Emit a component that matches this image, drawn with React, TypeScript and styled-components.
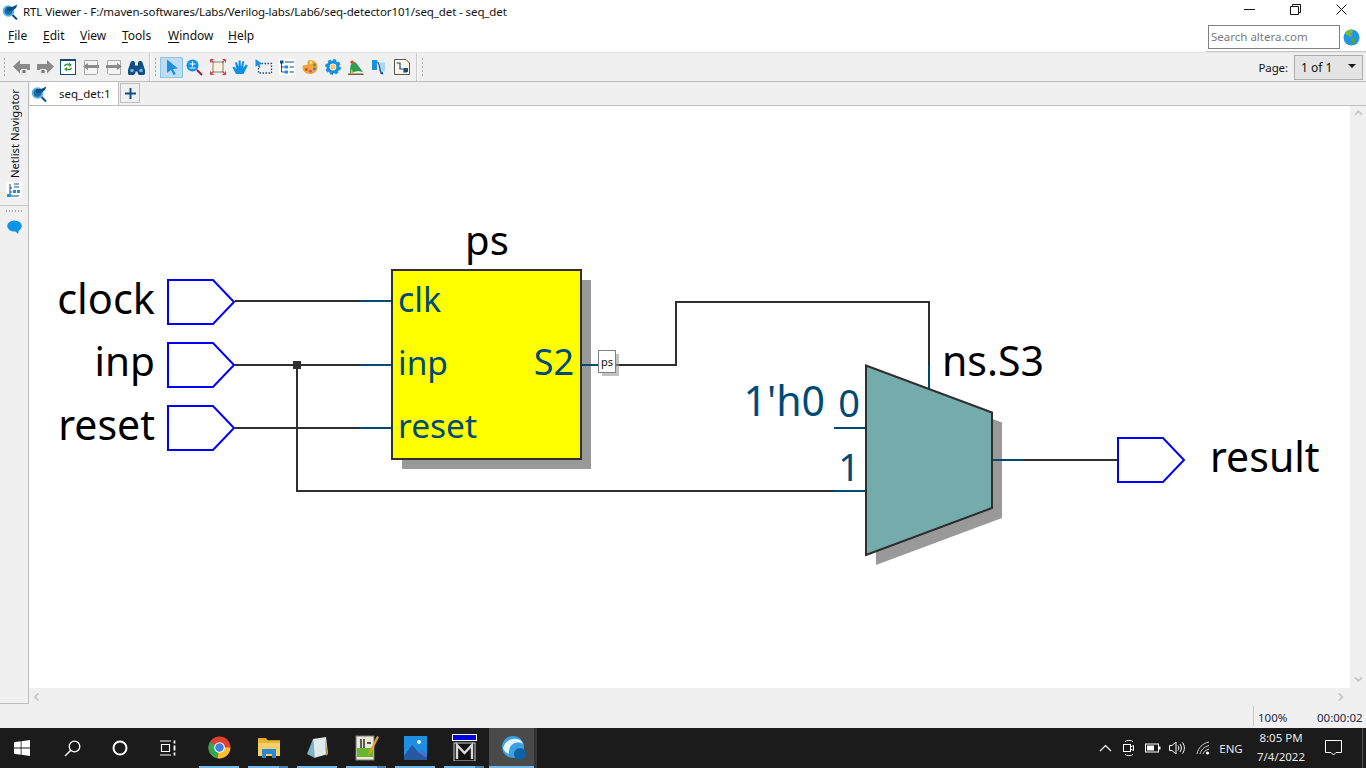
import React from 'react';
import styled, { createGlobalStyle } from 'styled-components';

const GlobalStyle = createGlobalStyle`
  html, body {
    margin: 0;
    padding: 0;
    background: #fff;
    overflow: hidden;
  }
  * {
    box-sizing: border-box;
  }
`;

const UI_FONT = '"Noto Sans", "Open Sans", "Liberation Sans", sans-serif';
const WIRE = '#2f2f2f';
const PIN = '#004b76';
const PORT = '#0000ff';
const SHADOW = '#999999';

const Page = styled.div`
  width: 1366px;
  height: 768px;
  display: flex;
  flex-direction: column;
  font-family: ${UI_FONT};
  font-size: 12px;
  color: #111;
  background: #f0f0f0;
  overflow: hidden;
`;

/* title bar */
const TitleBar = styled.div`
  height: 22px;
  display: flex;
  align-items: center;
  background: #fff;
  padding-left: 2px;
`;
const TitleText = styled.span`
  margin-left: 4px;
  font-size: 11.5px;
  letter-spacing: -0.1px;
  white-space: nowrap;
`;
const WindowButtons = styled.div`
  margin-left: auto;
  display: flex;
  height: 100%;
  margin-right: 2px;
`;
const WindowButton = styled.div`
  width: 46px;
  display: flex;
  align-items: center;
  justify-content: center;
  padding-bottom: 3px;
`;

/* menu bar */
const MenuBar = styled.div`
  height: 31px;
  display: flex;
  align-items: center;
  background: #fff;
  padding-left: 8px;
  border-bottom: 1px solid #e4e4e4;
`;
const MenuItem = styled.span<{ $w: number }>`
  width: ${(p) => p.$w}px;
  font-size: 12px;
  margin-top: -3px;
  u {
    text-decoration-thickness: 1px;
    text-underline-offset: 2px;
  }
`;
const SearchWrap = styled.div`
  margin-left: auto;
  height: 100%;
  width: 160px;
  display: flex;
  align-items: center;
  padding: 3px 0 2px 2px;
  border-bottom: 1px solid #c8c8c8;
  background: #fff;
`;
const SearchBox = styled.div`
  width: 132px;
  height: 24px;
  border: 1px solid #808080;
  color: #7a7a7a;
  font-size: 11.5px;
  line-height: 22px;
  padding-left: 2px;
`;
const GlobeSlot = styled.div`
  margin-left: 3px;
  display: flex;
`;

/* toolbar */
const ToolBar = styled.div`
  height: 29px;
  display: flex;
  align-items: center;
  background: #f0f0f0;
  border-bottom: 1px solid #bdbdbd;
  padding-left: 3px;
`;
const Grip = styled.div<{ $left?: number }>`
  width: 4px;
  height: 20px;
  margin-left: ${(p) => p.$left ?? 0}px;
  background-image: radial-gradient(circle, #a8a8a8 0.9px, transparent 1px);
  background-size: 3px 4px;
`;
const Separator = styled.div<{ $left: number }>`
  width: 2px;
  height: 28px;
  margin-left: ${(p) => p.$left}px;
  border-left: 1px solid #c8c8c8;
  border-right: 1px solid #fff;
`;
const ToolButton = styled.div<{ $active?: boolean }>`
  width: 23px;
  height: 21px;
  display: flex;
  align-items: center;
  justify-content: center;
  background: ${(p) => (p.$active ? '#bfdcf5' : 'transparent')};
  border: 1px solid ${(p) => (p.$active ? '#8cc4f0' : 'transparent')};
`;
const ToolGroup = styled.div<{ $left: number }>`
  display: flex;
  margin-left: ${(p) => p.$left}px;
`;
const PageLabel = styled.span`
  margin-left: auto;
  font-size: 11.5px;
  letter-spacing: -0.1px;
`;
const PageSelect = styled.div`
  width: 69px;
  height: 25px;
  margin: 0 3px 0 6px;
  display: flex;
  align-items: center;
  justify-content: space-between;
  padding: 0 6px;
  background: #e4e4e4;
  border: 1px solid #adadad;
  font-size: 12px;
`;
const Caret = styled.span`
  width: 0;
  height: 0;
  border-left: 4px solid transparent;
  border-right: 4px solid transparent;
  border-top: 4px solid #111;
  margin-top: -3px;
`;

/* body */
const Body = styled.div`
  flex: 1;
  display: flex;
  min-height: 0;
`;
const SideBar = styled.div`
  width: 29px;
  height: 622px;
  display: flex;
  flex-direction: column;
  align-items: center;
  background: #f0f0f0;
  border-right: 1px solid #bdbdbd;
  border-bottom: 1px solid #bdbdbd;
`;
const SideTop = styled.div`
  width: 100%;
  display: flex;
  flex-direction: column;
  align-items: center;
  padding-top: 8px;
  padding-bottom: 7px;
  border-bottom: 1px solid #c8c8c8;
`;
const SideLabel = styled.span`
  writing-mode: vertical-rl;
  transform: rotate(180deg);
  font-size: 11.2px;
  line-height: 14px;
  margin-left: 1px;
  white-space: nowrap;
  height: 88px;
  text-align: left;
`;
const SideIcon = styled.div`
  margin-top: 4px;
  width: 16px;
  height: 16px;
  background: #fff;
  display: flex;
`;
const SideDots = styled.div`
  width: 18px;
  height: 2px;
  margin-top: 4px;
  background-image: radial-gradient(circle, #a8a8a8 0.9px, transparent 1px);
  background-size: 3px 2px;
`;
const SideChat = styled.div`
  margin-top: 8px;
  display: flex;
`;
const Workspace = styled.div`
  flex: 1;
  display: flex;
  flex-direction: column;
  min-width: 0;
`;
const TabRow = styled.div`
  height: 24px;
  display: flex;
  align-items: flex-end;
  padding-left: 1px;
  border-bottom: 1px solid #bdbdbd;
`;
const Tab = styled.div`
  width: 89px;
  height: 23px;
  display: flex;
  align-items: center;
  background: #fff;
  border-right: 1px solid #bdbdbd;
  padding-left: 1px;
  font-size: 11.5px;
`;
const TabText = styled.span`
  margin-left: 11px;
`;
const AddTab = styled.div`
  width: 20px;
  height: 20px;
  margin: 0 0 1px 1px;
  align-self: center;
  display: flex;
  align-items: center;
  justify-content: center;
  background: #f0f0f0;
  border: 1px solid #bdbdbd;
`;
const CanvasRow = styled.div`
  height: 582px;
  display: flex;
`;
const Canvas = styled.div`
  width: 1321px;
  height: 582px;
  background: #fff;
`;
const VScroll = styled.div`
  flex: 1;
  display: flex;
  flex-direction: column;
  justify-content: space-between;
  align-items: center;
  padding: 3px 0;
`;
const HScroll = styled.div`
  height: 18px;
  width: 1321px;
  display: flex;
  align-items: center;
  justify-content: space-between;
  padding: 0 4px 0 4px;
`;
const StatusBar = styled.div`
  height: 22px;
  display: flex;
  justify-content: flex-end;
`;
const StatusCell = styled.div<{ $w: number }>`
  width: ${(p) => p.$w}px;
  height: 20px;
  padding-left: 4px;
  font-size: 11.5px;
  line-height: 24px;
  white-space: nowrap;
  color: #1f2a44;
`;
const StatusZoom = styled(StatusCell)`
  border-left: 1px solid #c8c8c8;
`;

/* schematic */
const Schematic = styled.svg`
  display: block;
`;
const Label = styled.text<{ $size: number; $pin?: boolean }>`
  font-family: "Noto Sans", "Open Sans", sans-serif;
  font-size: ${(p) => p.$size}px;
  fill: ${(p) => (p.$pin ? PIN : '#000')};
`;
const TinyLabel = styled.text`
  font-family: "Noto Sans", sans-serif;
  font-size: 11px;
  fill: #111;
`;

/* taskbar */
const TaskBar = styled.div`
  height: 40px;
  flex: none;
  display: flex;
  background: #1b1b1b;
  color: #e8e8e8;
`;
const ShellButton = styled.div<{ $w: number; $shift?: number }>`
  width: ${(p) => p.$w}px;
  padding-left: ${(p) => p.$shift ?? 0}px;
  display: flex;
  align-items: center;
  justify-content: center;
`;
const AppGroup = styled.div`
  display: flex;
  margin-left: 3px;
`;
const AppButton = styled.div<{ $active?: boolean }>`
  position: relative;
  width: 49px;
  height: 40px;
  display: flex;
  align-items: center;
  justify-content: center;
  padding-bottom: 1px;
  background: ${(p) =>
    p.$active ? 'linear-gradient(90deg, #4a4a4a 0 45px, #333 45px 48px, transparent 48px)' : 'transparent'};
`;
const AppLine = styled.span<{ $stacked?: boolean; $active?: boolean }>`
  position: absolute;
  bottom: 0;
  height: 2px;
  left: ${(p) => (p.$active ? 0 : 4)}px;
  width: ${(p) => (p.$active ? 45 : 40)}px;
  background: ${(p) =>
    p.$stacked ? 'linear-gradient(90deg, #76b9ed 0 31px, #4f82ab 31px)' : '#76b9ed'};
`;
const Tray = styled.div`
  margin-left: auto;
  display: flex;
  padding-right: 17px;
  position: relative;
`;
const TrayItem = styled.div<{ $w: number }>`
  width: ${(p) => p.$w}px;
  display: flex;
  align-items: center;
  justify-content: center;
  font-size: 11.5px;
`;
const Clock = styled(TrayItem)`
  flex-direction: column;
  line-height: 19px;
  padding-bottom: 2px;
  font-size: 11.5px;
`;
const TrayEdge = styled.span`
  position: absolute;
  right: 3px;
  top: 0;
  bottom: 0;
  width: 1px;
  background: #555;
`;

const RtlIcon: React.FC = () => (
  <svg width="17" height="17" viewBox="0 0 17 17">
    <circle cx="6.500" cy="8" r="5.800" fill="#4fb0e6" />
    <circle cx="6.500" cy="8" r="3.800" fill="#1c6aa8" />
    <path d="M5 4h5l5.500-2.500L14 5l-4 3H5z" fill="#0c4f86" />
    <path d="M10.500 12l4.500 4.500" stroke="#0c4f86" strokeWidth="2" />
  </svg>
);

const GlobeIcon: React.FC = () => (
  <svg width="17" height="17" viewBox="0 0 17 17">
    <circle cx="8.500" cy="8.500" r="8" fill="#1c97ea" />
    <path d="M3 2.500c2-1.500 4-2 6-1.500l1 2-2 2 1 2-2 1-3-2-2-1z" fill="#7fb53b" />
    <path d="M8 9l4 0.500 1 2-3 4.500-1-1-1-3z" fill="#5fa02c" />
  </svg>
);

const ArrowIcon: React.FC<{ flip?: boolean }> = ({ flip }) => (
  <svg width="20" height="17" viewBox="0 0 20 17">
    <g transform={flip ? 'translate(20 0) scale(-1 1)' : undefined}>
      <path d="M1 7.500l7-6.500v4h10v6H8v3.500z" fill="#8a8a8a" />
      <rect x="9" y="10" width="6" height="6" fill="#e8e8e8" />
      <rect x="10.500" y="11" width="3" height="3" fill="#777" />
    </g>
  </svg>
);

const RefreshIcon: React.FC = () => (
  <svg width="16" height="16" viewBox="0 0 16 16">
    <rect x="0.500" y="0.500" width="15" height="15" fill="#fff" stroke="#0f4a7c" />
    <rect x="0" y="0" width="16" height="2" fill="#0f4a7c" />
    <path d="M4 7c0-2 3-3 5-2V3.500l3 2.500-3 2V6.500C7.500 6 6 6 5 7.500z" fill="#3f9b3f" />
    <path d="M12 9c0 2-3 3-5 2v1.500L4 10l3-2v1.500C8.500 10 10 10 11 8.500z" fill="#3f9b3f" />
  </svg>
);

const PageArrowIcon: React.FC<{ flip?: boolean }> = ({ flip }) => (
  <svg width="16" height="15" viewBox="0 0 16 15">
    <g transform={flip ? 'translate(16 0) scale(-1 1)' : undefined}>
      <path d="M1.500 0.500h13v12.500l-1.500 1.500H1.500z" fill="#f4f4f4" stroke="#a8a8a8" />
      <path d="M0 6.500L5 3v2h11v3H5v2z" fill="#8a8a8a" />
    </g>
  </svg>
);

const BinocularsIcon: React.FC = () => (
  <svg width="17" height="15" viewBox="0 0 17 15">
    <path d="M2.500 2.500C3 0.500 6.500 0.500 7 2.500v3h3v-3c0.500-2 4-2 4.500 0L17 10a4 4 0 1 1-7.500 1.500h-2A4 4 0 1 1 0 10z" fill="#134f84" />
    <circle cx="4" cy="10.500" r="1.800" fill="#6fb6e6" />
    <circle cx="13" cy="10.500" r="1.800" fill="#6fb6e6" />
  </svg>
);

const PointerIcon: React.FC = () => (
  <svg width="14" height="16" viewBox="0 0 14 16">
    <path d="M2 0.500l11 9-5 .6 2.800 4.900-2.200 1-2.700-5L2 14z" fill="#1b8fe0" />
  </svg>
);

const ZoomIcon: React.FC = () => (
  <svg width="17" height="17" viewBox="0 0 17 17">
    <circle cx="6.500" cy="6.500" r="6" fill="#0a94e8" />
    <path d="M3.500 5h6M6.500 2.500v5M3.500 9h6" stroke="#fff" strokeWidth="1.200" />
    <path d="M11 11l5 5" stroke="#9b1c2e" strokeWidth="2" />
  </svg>
);

const FitIcon: React.FC = () => (
  <svg width="16" height="16" viewBox="0 0 16 16">
    <rect x="3" y="3" width="10" height="10" fill="#fbf3dc" stroke="#666" strokeWidth="0.800" />
    <path d="M0.500 0.500l3 3M0.500 0.500h3M0.500 0.500v3M15.500 0.500l-3 3M15.500 0.500h-3M15.500 0.500v3M0.500 15.500l3-3M0.500 15.500h3M0.500 15.500v-3M15.500 15.500l-3-3M15.500 15.500h-3M15.500 15.500v-3" stroke="#e03030" strokeWidth="1.100" fill="none" />
  </svg>
);

const HandIcon: React.FC = () => (
  <svg width="17" height="16" viewBox="0 0 17 16">
    <path d="M4 15L0.500 8.500 2 7.500l2.500 2.500L3 3.500 4.800 3 6.500 8 6.700 1.500h1.900L9 8l1.500-6 1.800 0.500L11 9l3-3.500 1.800 1L11.500 15z" fill="#0d8fe4" />
  </svg>
);

const MarqueeIcon: React.FC = () => (
  <svg width="18" height="16" viewBox="0 0 18 16">
    <rect x="3.500" y="4.500" width="13" height="9.500" fill="none" stroke="#134f84" strokeWidth="1.300" strokeDasharray="1.500 1.500" />
    <path d="M0.500 0l7 5-3 .5 1 3-1 .5-1.500-3L0.500 8z" fill="#1b8fe0" />
  </svg>
);

const HierarchyIcon: React.FC = () => (
  <svg width="16" height="16" viewBox="0 0 16 16">
    <rect width="16" height="16" fill="#fff" />
    <path d="M2.500 3v10M2.500 8h3M2.500 13h3" stroke="#134f84" />
    <rect x="1" y="1.500" width="3.500" height="3" fill="#134f84" />
    <rect x="5.500" y="6.500" width="3.500" height="3" fill="#1c8fe0" />
    <rect x="5.500" y="11.500" width="3.500" height="3" fill="#1c8fe0" />
    <path d="M6 3h9M10.500 8H15M10.500 13H15" stroke="#134f84" strokeWidth="1.200" />
  </svg>
);

const PaletteIcon: React.FC = () => (
  <svg width="16" height="16" viewBox="0 0 16 16">
    <path d="M8 1c4.500 0 7.500 3 7.500 7 0 4.500-3.500 7-7.500 7-4.500 0-7.500-3-7.500-6.500 0-2.500 2-2.500 3.500-2.500S6 5 5.500 3.500C5.200 2 6 1 8 1z" fill="#f3a53c" />
    <circle cx="9" cy="3.500" r="1.300" fill="#f4f0a0" />
    <circle cx="12.500" cy="6" r="1.400" fill="#3fa34a" />
    <circle cx="12.500" cy="10" r="1.400" fill="#2f7fd0" />
    <circle cx="8.500" cy="12.300" r="1.400" fill="#c34bb0" />
    <circle cx="4.300" cy="10.500" r="1.400" fill="#e2403a" />
  </svg>
);

const GearIcon: React.FC = () => (
  <svg width="16" height="16" viewBox="0 0 16 16">
    <circle cx="8" cy="8" r="5" fill="none" stroke="#1590e2" strokeWidth="3.200" />
    <circle cx="8" cy="8" r="6.800" fill="none" stroke="#1590e2" strokeWidth="2.200" strokeDasharray="3 2.340" />
    <circle cx="8" cy="8" r="2.600" fill="#f6c66a" />
  </svg>
);

const BirdIcon: React.FC = () => (
  <svg width="16" height="17" viewBox="0 0 16 17">
    <path d="M2 14c0-4 0-8 2-10 2-2 4-1 5 1l6 8-5-1z" fill="#2f9e4d" />
    <path d="M2 3.500L4 2c1-.5 2 0 2.200 1L4 5z" fill="#e8a032" />
    <circle cx="4" cy="3" r="1.600" fill="#d9402e" />
    <path d="M0 14.500h15l1 1.500H0z" fill="#7a5540" />
    <path d="M3 10l3 4H3z" fill="#e6c14a" />
  </svg>
);

const PortsIcon: React.FC = () => (
  <svg width="16" height="17" viewBox="0 0 16 17">
    <path d="M1 1h5v10H1z" fill="#1590e2" />
    <path d="M8 3.500h6v9H8z" fill="#a9d6f2" />
    <path d="M6 3c3 0 2 9 5 12" fill="none" stroke="#134f84" strokeWidth="1.200" />
    <path d="M9 14.500l3.500 1-1-3z" fill="#134f84" />
  </svg>
);

const SheetIcon: React.FC = () => (
  <svg width="16" height="16" viewBox="0 0 16 16">
    <path d="M0.500 0.500H12L15.500 4v11.500H0.500z" fill="#fdf6e2" stroke="#555" />
    <path d="M2.500 4h3.500v6h4v3h3" fill="none" stroke="#134f84" strokeWidth="1.200" />
    <rect x="10" y="9" width="4" height="4" fill="#134f84" />
  </svg>
);

const NetlistIcon: React.FC = () => (
  <svg width="16" height="16" viewBox="0 0 16 16">
    <path d="M4 2v12M4 14h9M4 10h2M4 6h2M8 2h5M8 5h5" stroke="#134f84" strokeWidth="1" fill="none" />
    <rect x="1" y="12" width="4" height="3" fill="#1c8fe0" />
    <rect x="7" y="8" width="3" height="3" fill="#1c8fe0" />
    <rect x="11" y="8" width="3" height="3" fill="#1c8fe0" />
  </svg>
);

const ChatIcon: React.FC = () => (
  <svg width="15" height="14" viewBox="0 0 15 14">
    <ellipse cx="7.500" cy="6" rx="7.300" ry="5.600" fill="#0d94e6" />
    <path d="M7 10h5l-1 4z" fill="#0d94e6" />
  </svg>
);

const Chevron: React.FC<{ dir: 'left' | 'right' | 'up' | 'down' }> = ({ dir }) => {
  const d = { left: 'M6 1L2 5l4 4', right: 'M2 1l4 4-4 4', up: 'M1 6l4-4 4 4', down: 'M1 2l4 4 4-4' }[dir];
  return (
    <svg width="9" height="10" viewBox="0 0 10 10">
      <path d={d} fill="none" stroke="#c8c8c8" strokeWidth="2" />
    </svg>
  );
};

const WinLogo: React.FC = () => (
  <svg width="16" height="16" viewBox="0 0 16 16">
    <path d="M0 2.300l6.700-1v6.300H0zM7.500 1.200L16 0v7.600H7.500zM0 8.400h6.700v6.300l-6.700-1zM7.500 8.400H16V16l-8.500-1.200z" fill="#fff" />
  </svg>
);

const SearchGlass: React.FC = () => (
  <svg width="17" height="17" viewBox="0 0 17 17">
    <circle cx="10.500" cy="6.500" r="5.300" fill="none" stroke="#fff" strokeWidth="1.300" />
    <path d="M6.800 10.300L1 16" stroke="#fff" strokeWidth="1.500" />
  </svg>
);

const CortanaRing: React.FC = () => (
  <svg width="16" height="16" viewBox="0 0 16 16">
    <circle cx="8" cy="8" r="6.500" fill="none" stroke="#fff" strokeWidth="2" />
  </svg>
);

const TaskViewIcon: React.FC = () => (
  <svg width="16" height="16" viewBox="0 0 16 16">
    <path d="M0 1h11M0 15h11M1.500 4.500h8v7h-8z" fill="none" stroke="#fff" strokeWidth="1.100" />
    <path d="M14.500 0.500v3M14.500 5.500v5M14.500 12.500v3" stroke="#fff" strokeWidth="1.800" />
  </svg>
);

const ChromeIcon: React.FC = () => (
  <svg width="23" height="23" viewBox="0 0 24 24">
    <circle cx="12" cy="12" r="11.500" fill="#e2402f" />
    <path d="M12 12L2 6.300A11.500 11.500 0 0 0 10 23.300z" fill="#2da94f" />
    <path d="M12 12h11.300A11.500 11.500 0 0 1 10 23.300z" fill="#fbc02d" />
    <circle cx="12" cy="12" r="5.600" fill="#fff" />
    <circle cx="12" cy="12" r="4.400" fill="#3f7fe6" />
  </svg>
);

const FolderIcon: React.FC = () => (
  <svg width="22" height="20" viewBox="0 0 22 20">
    <path d="M0 0h8l2 3h-10z" fill="#e9a825" />
    <path d="M0 2.500h22V18H0z" fill="#f4cf6a" />
    <path d="M0 2.500h22V5H0z" fill="#e9b530" />
    <path d="M4 11h14v9h-4v-4H8v4H4z" fill="#2b87d3" />
  </svg>
);

const NoteIcon: React.FC = () => (
  <svg width="24" height="24" viewBox="0 0 24 24">
    <path d="M7 3l13-2 2 17-14 4z" fill="#dfe9e9" />
    <path d="M7 3L1 18l8 4z" fill="#7eb5c4" />
    <path d="M19 3l3 15-2 2z" fill="#a98c52" />
  </svg>
);

const ChartPadIcon: React.FC = () => (
  <svg width="24" height="26" viewBox="0 0 24 26">
    <rect x="1" y="1" width="18" height="24" fill="#e8e8d8" stroke="#777" />
    <rect x="2" y="13" width="16" height="9" fill="#6ab52e" />
    <path d="M6 4v9M9 4v9M12 8h4" stroke="#222" strokeWidth="1.400" />
    <path d="M22 1l-8 16-1 3 3-2 8-16z" fill="#e8a020" />
  </svg>
);

const PhotosIcon: React.FC = () => (
  <svg width="23" height="24" viewBox="0 0 23 24">
    <rect width="23" height="24" fill="#1f8fe4" />
    <circle cx="15" cy="6" r="2" fill="#e8f4ff" />
    <path d="M0 20L8 9l7 8 3-3 5 5v5H0z" fill="#27589f" />
    <path d="M15 17l3-3 5 5v3z" fill="#4b6fd1" />
  </svg>
);

const ModelSimIcon: React.FC = () => (
  <svg width="25" height="27" viewBox="0 0 25 27">
    <rect x="0.500" y="0.500" width="24" height="6" fill="#0000e0" stroke="#fff" />
    <rect x="2" y="9" width="21" height="18" fill="#111" stroke="#cfcfcf" />
    <path d="M5 25V11l7.500 8L20 11v14" fill="none" stroke="#d8d8d8" strokeWidth="2.400" />
  </svg>
);

const ShellBallIcon: React.FC = () => (
  <svg width="24" height="24" viewBox="0 0 24 24">
    <circle cx="11" cy="11" r="11" fill="#3aa2e4" />
    <path d="M1 12C3 5 9 2 15 3c3 .5 5 2 6 5-3-2-7-2-10 0-3 1.500-4 5-4 10-3-1-5-3-6-6z" fill="#e4f4fd" />
    <circle cx="18" cy="18" r="6" fill="#0c63a8" />
  </svg>
);

const MeetIcon: React.FC = () => (
  <svg width="14" height="18" viewBox="0 0 14 18">
    <path d="M3 2.500c2-1.500 6-1.500 8 0M3 15.500c2 1.500 6 1.500 8 0" fill="none" stroke="#ddd" />
    <rect x="1.500" y="5.500" width="7" height="7" fill="none" stroke="#fff" />
    <path d="M8.500 8l3-1.500v5l-3-1.500" fill="none" stroke="#fff" />
  </svg>
);

const BatteryIcon: React.FC = () => (
  <svg width="16" height="10" viewBox="0 0 16 10">
    <rect x="0.500" y="1" width="13" height="8" fill="none" stroke="#fff" />
    <rect x="2" y="2.500" width="7" height="5" fill="#fff" />
    <rect x="14" y="3.500" width="1.500" height="3" fill="#fff" />
  </svg>
);

const SpeakerIcon: React.FC = () => (
  <svg width="17" height="14" viewBox="0 0 17 14">
    <path d="M0.500 4.500h2.500L7 1v12L3 9.500H0.500z" fill="none" stroke="#fff" />
    <path d="M9 4.500c1 1.500 1 3.500 0 5M11 3c1.800 2.500 1.800 5.500 0 8M13.500 1.500c2.500 3.500 2.500 7.500 0 11" fill="none" stroke="#fff" />
  </svg>
);

const WifiIcon: React.FC = () => (
  <svg width="14" height="14" viewBox="0 0 14 14">
    <path d="M1 13C2 7 7 2 13 1M4 13c1-4 4-7 9-8.500M7 13c.5-2 2.500-4 6-5" fill="none" stroke="#cfcfcf" />
    <circle cx="11.500" cy="12" r="1.600" fill="#fff" />
  </svg>
);

const NotifyIcon: React.FC = () => (
  <svg width="17" height="16" viewBox="0 0 17 16">
    <path d="M0.500 0.500h16v12h-5.500l-2.500 2.500-2.500-2.500H0.500z" fill="none" stroke="#fff" />
  </svg>
);

const Port: React.FC<{ x: number; y: number }> = ({ x, y }) => (
  <polygon
    points={`${x},${y - 22} ${x + 45},${y - 22} ${x + 66},${y} ${x + 45},${y + 22} ${x},${y + 22}`}
    fill="#fff"
    stroke={PORT}
    strokeWidth="2"
  />
);

const Wire: React.FC<{ d: string; pin?: boolean }> = ({ d, pin }) => (
  <path d={d} fill="none" stroke={pin ? PIN : WIRE} strokeWidth="2" />
);

const MUX_POINTS = '866,365.500 992,412.500 992,508 866,555';
const MUX_SHADOW = '876,375.500 1002,422.500 1002,518 876,565';

const Diagram: React.FC = () => (
  <Schematic width="1321" height="582" viewBox="29 106 1321 582">
    <rect x="402" y="280" width="189" height="189" fill={SHADOW} />
    <polygon points={MUX_SHADOW} fill={SHADOW} />

    <Wire d="M235 301H360M235 365H360M235 428H360M297 365V491H834M616 365H676V302H929V365M1023 460H1117" />
    <Wire pin d="M360 301H392M360 365H392M360 428H392M582 365H598M834 428H866M834 491H866M929 365V390M993 460H1023" />
    <rect x="293" y="361" width="8" height="8" fill={WIRE} />

    <Port x={168} y={302} />
    <Port x={168} y={365} />
    <Port x={168} y={428} />
    <Port x={1118} y={460} />

    <Label $size={41.5} x="155" y="314" textAnchor="end">clock</Label>
    <Label $size={40.5} x="155" y="376" textAnchor="end">inp</Label>
    <Label $size={41} x="155" y="440" textAnchor="end">reset</Label>
    <Label $size={41} x="1210" y="472">result</Label>
    <Label $size={40} x="487" y="255" textAnchor="middle">ps</Label>
    <Label $size={41} x="942" y="376">ns.S3</Label>

    <rect x="392" y="270" width="189" height="189" fill="#ffff00" stroke={WIRE} strokeWidth="2" />
    <Label $pin $size={34} x="398" y="312">clk</Label>
    <Label $pin $size={33.500} x="398" y="375">inp</Label>
    <Label $pin $size={33.500} x="398" y="438">reset</Label>
    <Label $pin $size={36} x="574" y="375" textAnchor="end">S2</Label>

    <rect x="602" y="354" width="17" height="22" fill={SHADOW} opacity="0.6" />
    <rect x="598.500" y="350.500" width="17" height="22" fill="#fff" stroke="#808080" />
    <TinyLabel x="601" y="366">ps</TinyLabel>

    <polygon points={MUX_POINTS} fill="#74abab" stroke={WIRE} strokeWidth="2" strokeLinejoin="miter" />
    <Label $pin $size={41} x="825" y="416" textAnchor="end">1'h0</Label>
    <Label $pin $size={38} x="849" y="417" textAnchor="middle">0</Label>
    <Label $pin $size={38} x="849" y="481" textAnchor="middle">1</Label>
  </Schematic>
);

const App: React.FC = () => (
  <Page>
    <GlobalStyle />
    <TitleBar>
      <RtlIcon />
      <TitleText>RTL Viewer - F:/maven-softwares/Labs/Verilog-labs/Lab6/seq-detector101/seq_det - seq_det</TitleText>
      <WindowButtons>
        <WindowButton>
          <svg width="11" height="11" viewBox="0 0 11 11">
            <path d="M0 5.500h11" stroke="#111" />
          </svg>
        </WindowButton>
        <WindowButton>
          <svg width="11" height="11" viewBox="0 0 11 11">
            <path d="M0.500 2.500h8v8h-8zM2.500 2.500v-2h8v8h-2" fill="none" stroke="#111" />
          </svg>
        </WindowButton>
        <WindowButton>
          <svg width="11" height="11" viewBox="0 0 11 11">
            <path d="M0.500 0.500l10 10M10.500 0.500l-10 10" stroke="#111" />
          </svg>
        </WindowButton>
      </WindowButtons>
    </TitleBar>

    <MenuBar>
      <MenuItem $w={35}><u>F</u>ile</MenuItem>
      <MenuItem $w={37}><u>E</u>dit</MenuItem>
      <MenuItem $w={42}><u>V</u>iew</MenuItem>
      <MenuItem $w={46}><u>T</u>ools</MenuItem>
      <MenuItem $w={60}><u>W</u>indow</MenuItem>
      <MenuItem $w={40}><u>H</u>elp</MenuItem>
      <SearchWrap>
        <SearchBox>Search altera.com</SearchBox>
        <GlobeSlot><GlobeIcon /></GlobeSlot>
      </SearchWrap>
    </MenuBar>

    <ToolBar>
      <Grip />
      <ToolGroup $left={3}>
        <ToolButton><ArrowIcon /></ToolButton>
        <ToolButton><ArrowIcon flip /></ToolButton>
        <ToolButton><RefreshIcon /></ToolButton>
        <ToolButton><PageArrowIcon /></ToolButton>
        <ToolButton><PageArrowIcon flip /></ToolButton>
        <ToolButton><BinocularsIcon /></ToolButton>
      </ToolGroup>
      <Separator $left={1} />
      <Grip $left={3} />
      <ToolGroup $left={2}>
        <ToolButton $active><PointerIcon /></ToolButton>
        <ToolButton><ZoomIcon /></ToolButton>
        <ToolButton><FitIcon /></ToolButton>
        <ToolButton><HandIcon /></ToolButton>
        <ToolButton><MarqueeIcon /></ToolButton>
        <ToolButton><HierarchyIcon /></ToolButton>
        <ToolButton><PaletteIcon /></ToolButton>
        <ToolButton><GearIcon /></ToolButton>
        <ToolButton><BirdIcon /></ToolButton>
        <ToolButton><PortsIcon /></ToolButton>
        <ToolButton><SheetIcon /></ToolButton>
      </ToolGroup>
      <Separator $left={3} />
      <Grip $left={3} />
      <PageLabel>Page:</PageLabel>
      <PageSelect>
        <span>1 of 1</span>
        <Caret />
      </PageSelect>
    </ToolBar>

    <Body>
      <SideBar>
        <SideTop>
          <SideLabel>Netlist Navigator</SideLabel>
          <SideIcon><NetlistIcon /></SideIcon>
        </SideTop>
        <SideDots />
        <SideChat><ChatIcon /></SideChat>
      </SideBar>
      <Workspace>
        <TabRow>
          <Tab>
            <RtlIcon />
            <TabText>seq_det:1</TabText>
          </Tab>
          <AddTab>
            <svg width="11" height="11" viewBox="0 0 11 11">
              <path d="M5.500 0v11M0 5.500h11" stroke="#134f84" strokeWidth="2" />
            </svg>
          </AddTab>
        </TabRow>
        <CanvasRow>
          <Canvas><Diagram /></Canvas>
          <VScroll>
            <Chevron dir="up" />
            <Chevron dir="down" />
          </VScroll>
        </CanvasRow>
        <HScroll>
          <Chevron dir="left" />
          <Chevron dir="right" />
        </HScroll>
        <StatusBar>
          <StatusZoom $w={60}>100%</StatusZoom>
          <StatusCell $w={53}>00:00:02</StatusCell>
        </StatusBar>
      </Workspace>
    </Body>

    <TaskBar>
      <ShellButton $w={44}><WinLogo /></ShellButton>
      <ShellButton $w={52} $shift={4}><SearchGlass /></ShellButton>
      <ShellButton $w={48}><CortanaRing /></ShellButton>
      <ShellButton $w={48}><TaskViewIcon /></ShellButton>
      <AppGroup>
        <AppButton><ChromeIcon /><AppLine /></AppButton>
        <AppButton><FolderIcon /><AppLine $stacked /></AppButton>
        <AppButton><NoteIcon /><AppLine /></AppButton>
        <AppButton><ChartPadIcon /><AppLine $stacked /></AppButton>
        <AppButton><PhotosIcon /><AppLine /></AppButton>
        <AppButton><ModelSimIcon /><AppLine $stacked /></AppButton>
        <AppButton $active><ShellBallIcon /><AppLine $active /></AppButton>
      </AppGroup>
      <Tray>
        <TrayItem $w={24}>
          <svg width="13" height="8" viewBox="0 0 13 8">
            <path d="M1 7l5.500-5.500L12 7" fill="none" stroke="#fff" strokeWidth="1.200" />
          </svg>
        </TrayItem>
        <TrayItem $w={24}><MeetIcon /></TrayItem>
        <TrayItem $w={24}><BatteryIcon /></TrayItem>
        <TrayItem $w={24}><SpeakerIcon /></TrayItem>
        <TrayItem $w={28}><WifiIcon /></TrayItem>
        <TrayItem $w={28}>ENG</TrayItem>
        <Clock $w={72}>
          <span>8:05 PM</span>
          <span>7/4/2022</span>
        </Clock>
        <TrayItem $w={32}><NotifyIcon /></TrayItem>
        <TrayEdge />
      </Tray>
    </TaskBar>
  </Page>
);

export default App;
